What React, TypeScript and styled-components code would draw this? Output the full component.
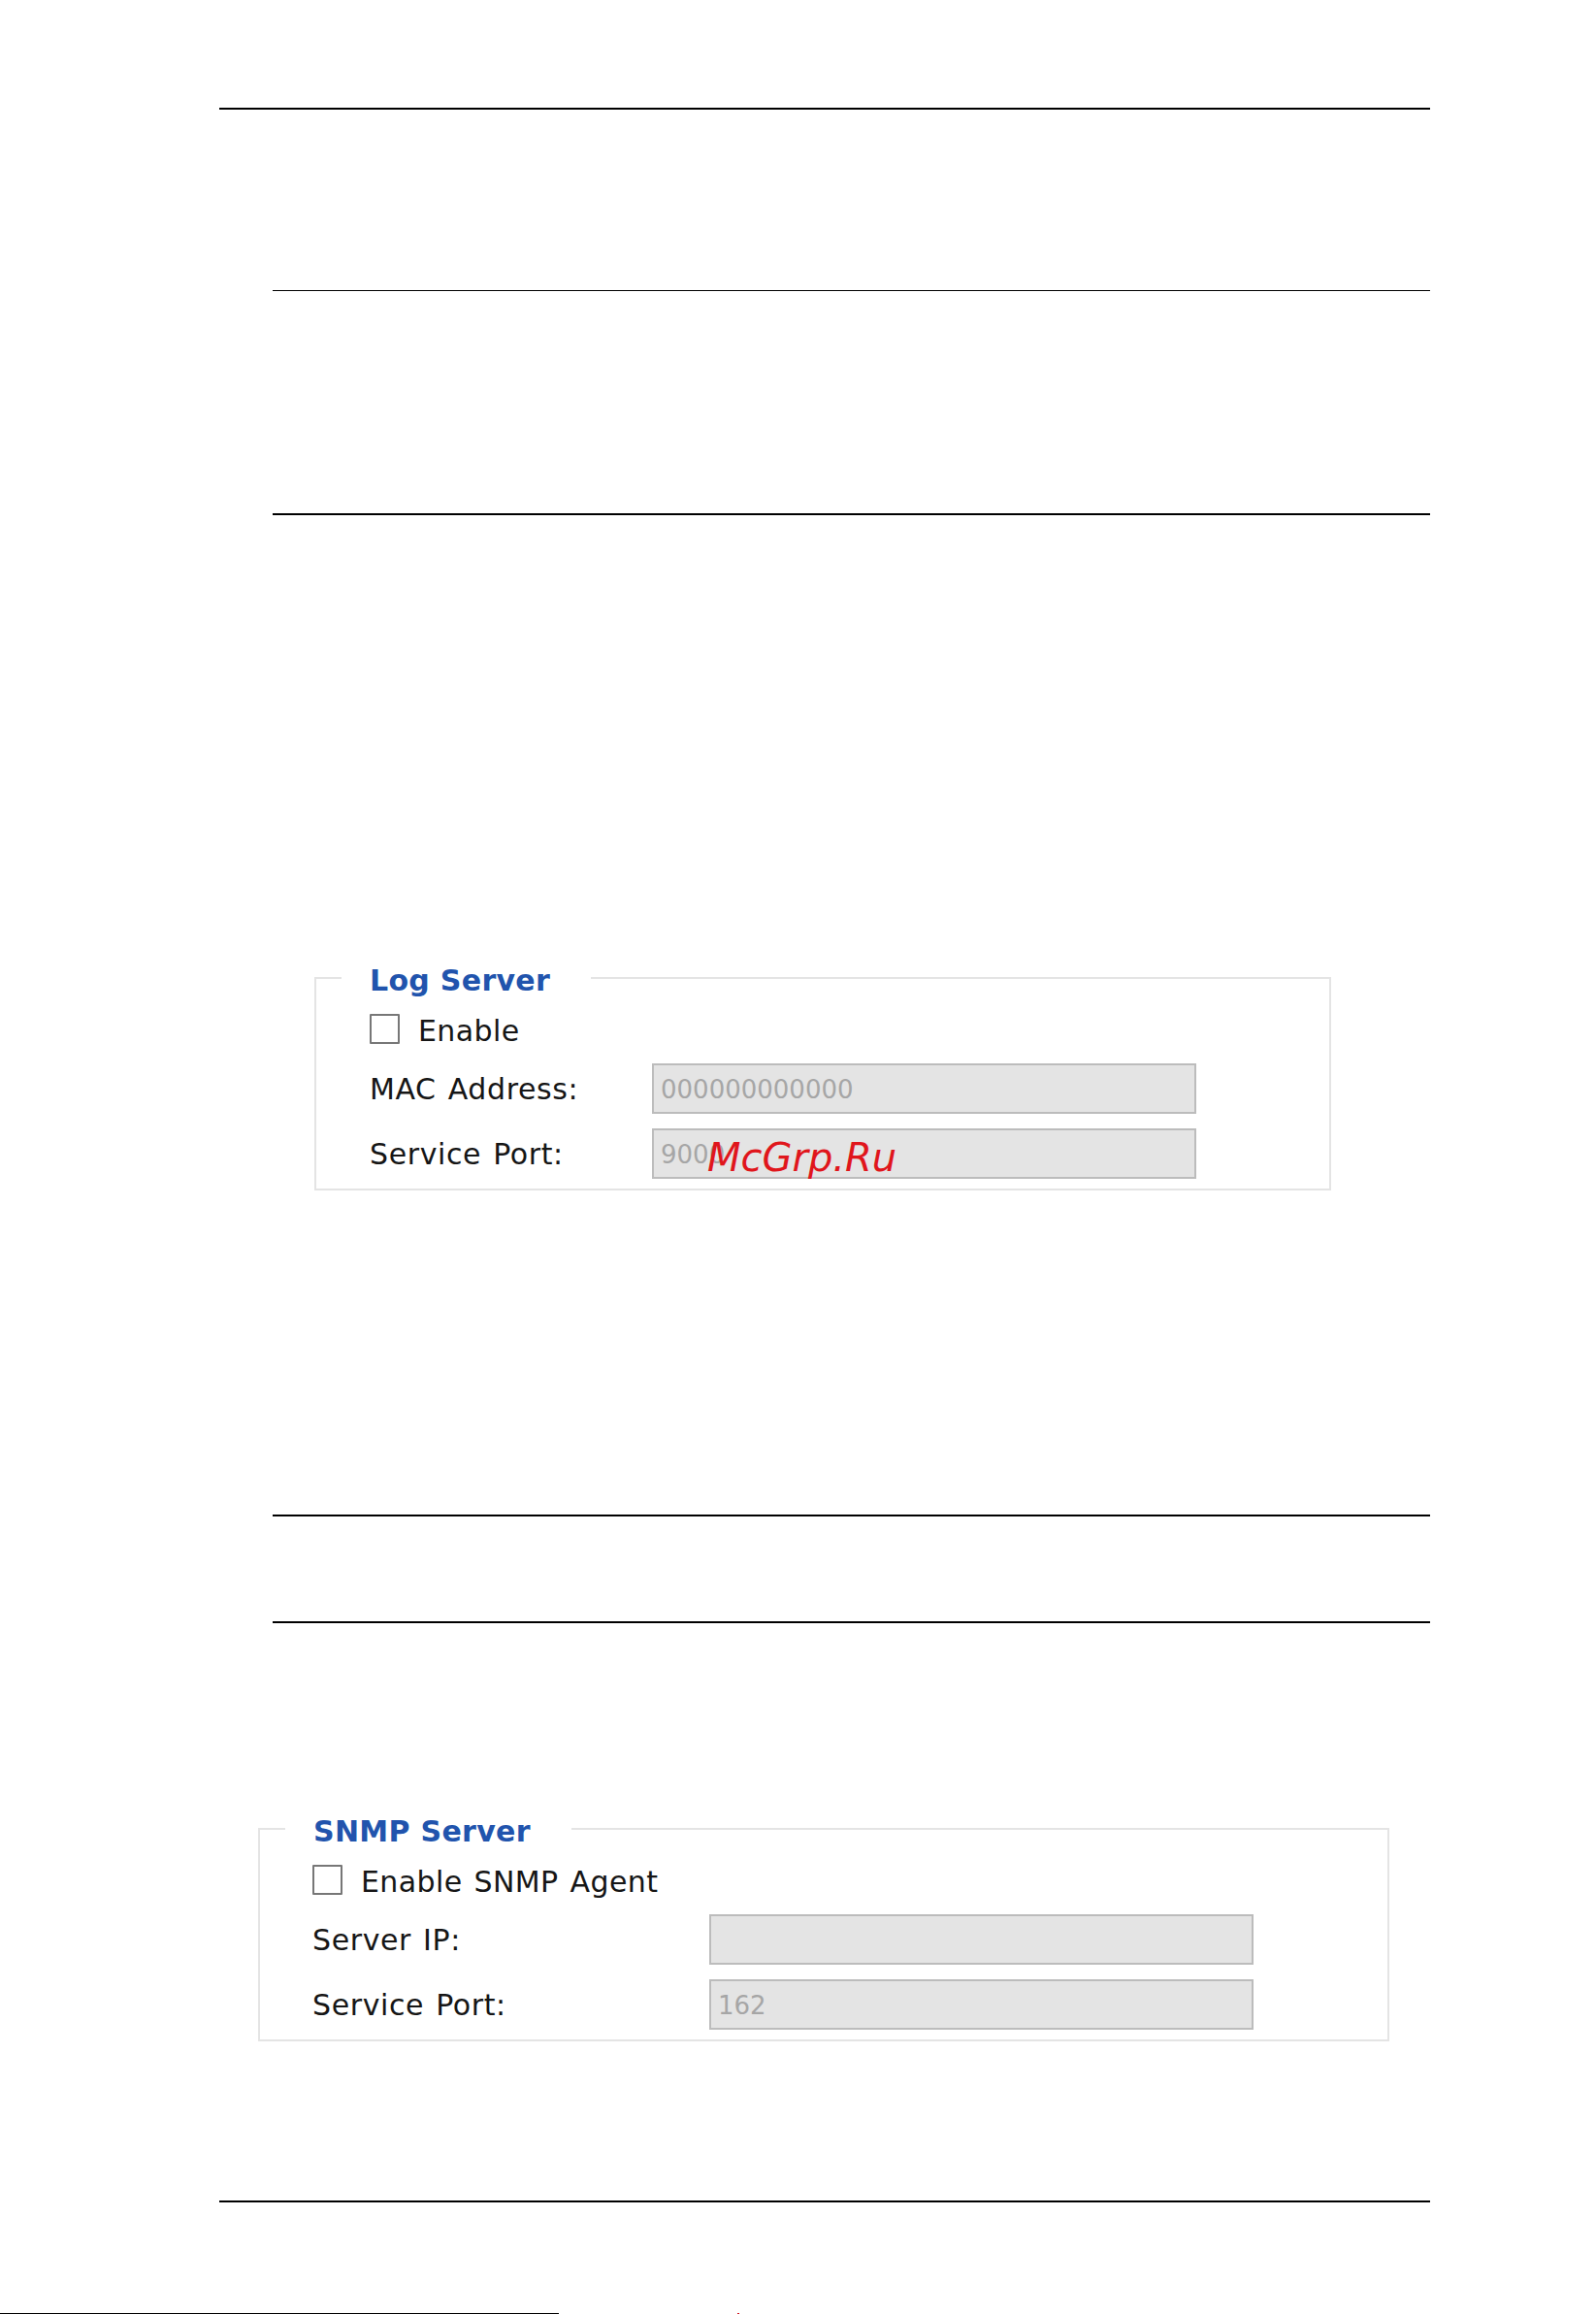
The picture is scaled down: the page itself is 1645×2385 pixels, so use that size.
import React from "react";
import styled, { createGlobalStyle } from "styled-components";

const Global = createGlobalStyle`
  html, body {
    margin: 0;
    padding: 0;
    background: #ffffff;
  }
  body {
    font-family: "DejaVu Sans", Verdana, sans-serif;
    color: #161616;
  }
`;

const Page = styled.div`
  width: 1645px;
  height: 2385px;
  display: flex;
  flex-direction: column;
  overflow: hidden;
  background: #ffffff;
`;

const Rule = styled.div<{ $top: number; $left: number; $thick: number }>`
  flex: none;
  margin-top: ${(p) => p.$top}px;
  margin-left: ${(p) => p.$left}px;
  width: ${(p) => 1474 - p.$left}px;
  height: ${(p) => p.$thick}px;
  background: #000000;
`;

const Panel = styled.fieldset<{ $top: number; $left: number; $width: number }>`
  flex: none;
  box-sizing: border-box;
  margin: ${(p) => p.$top}px 0 0 ${(p) => p.$left}px;
  width: ${(p) => p.$width}px;
  padding: 0;
  border: 2px solid #e4e4e4;
  min-inline-size: 0;
`;

const Legend = styled.legend`
  margin-left: 26px;
  padding: 7px 42px 0 29px;
  font-family: "DejaVu Sans", Verdana, sans-serif;
  font-weight: bold;
  font-size: 30px;
  line-height: 36px;
  letter-spacing: 0.3px;
  color: #2154ad;
`;

const PanelBody = styled.div<{ $labelWidth: number; $padLeft: number; $padRight: number }>`
  display: grid;
  grid-template-columns: ${(p) => p.$labelWidth}px 561px;
  grid-template-rows: 36px 52px 52px;
  row-gap: 15px;
  padding: 16px ${(p) => p.$padRight}px 10px ${(p) => p.$padLeft}px;
`;

const CheckRow = styled.label`
  grid-column: 1 / span 2;
  align-self: start;
  height: 31px;
  display: flex;
  align-items: center;
  gap: 19px;
  font-size: 30px;
  line-height: 35px;
  letter-spacing: 0.4px;
  word-spacing: 2px;
  color: #161616;
`;

const CheckText = styled.span`
  padding-top: 4px;
  white-space: nowrap;
`;

const Box = styled.input`
  appearance: none;
  -webkit-appearance: none;
  box-sizing: border-box;
  width: 31px;
  height: 31px;
  margin: 0;
  border: 2px solid #777777;
  border-radius: 1px;
  background: #ffffff;
  flex: none;
`;

const FieldLabel = styled.span`
  align-self: center;
  font-size: 30px;
  line-height: 35px;
  letter-spacing: 0.6px;
  word-spacing: 2px;
  white-space: nowrap;
  color: #161616;
`;

const FieldWrap = styled.div`
  position: relative;
  width: 561px;
  height: 52px;
`;

const Field = styled.input`
  box-sizing: border-box;
  width: 561px;
  height: 52px;
  margin: 0;
  padding: 2px 8px 0 7px;
  border: 2px solid #bcbcbc;
  background: #e4e4e4;
  font-family: "DejaVu Sans", Verdana, sans-serif;
  font-size: 26px;
  color: #a6a6a6;
  outline: none;
  &:disabled {
    color: #a6a6a6;
    -webkit-text-fill-color: #a6a6a6;
    opacity: 1;
  }
`;

const Watermark = styled.span`
  position: absolute;
  left: 57px;
  top: 10px;
  font-family: "DejaVu Sans", sans-serif;
  font-style: italic;
  font-size: 40px;
  line-height: 40px;
  color: #e0161c;
  white-space: nowrap;
  pointer-events: none;
`;

const EdgeRow = styled.div`
  flex: none;
  margin-top: 114px;
  height: 1px;
  display: flex;
  align-items: flex-start;
`;

const EdgeLine = styled.div`
  width: 576px;
  height: 1px;
  background: #000000;
`;

const EdgeDot = styled.div`
  margin-left: 184px;
  width: 2px;
  height: 1px;
  background: #d0101a;
`;

type Row = { label: string; value: string; mark?: boolean };

function ServerPanel(props: {
  title: string;
  check: string;
  rows: Row[];
  top: number;
  left: number;
  width: number;
  labelWidth: number;
  padLeft: number;
  padRight: number;
}) {
  return (
    <Panel $top={props.top} $left={props.left} $width={props.width}>
      <Legend>{props.title}</Legend>
      <PanelBody $labelWidth={props.labelWidth} $padLeft={props.padLeft} $padRight={props.padRight}>
        <CheckRow>
          <Box type="checkbox" />
          <CheckText>{props.check}</CheckText>
        </CheckRow>
        {props.rows.map((r) => (
          <React.Fragment key={r.label}>
            <FieldLabel>{r.label}</FieldLabel>
            <FieldWrap>
              <Field type="text" disabled value={r.value} readOnly />
              {r.mark && <Watermark>McGrp.Ru</Watermark>}
            </FieldWrap>
          </React.Fragment>
        ))}
      </PanelBody>
    </Panel>
  );
}

export default function App() {
  return (
    <>
      <Global />
      <Page>
        <Rule $top={111} $left={226} $thick={2} />
        <Rule $top={186} $left={281} $thick={1} />
        <Rule $top={229} $left={281} $thick={2} />
        <ServerPanel
          title="Log Server"
          check="Enable"
          rows={[
            { label: "MAC Address:", value: "000000000000" },
            { label: "Service Port:", value: "9000", mark: true },
          ]}
          top={455}
          left={324}
          width={1048}
          labelWidth={291}
          padLeft={55}
          padRight={137}
        />
        <Rule $top={334} $left={281} $thick={2} />
        <Rule $top={108} $left={281} $thick={2} />
        <ServerPanel
          title="SNMP Server"
          check="Enable SNMP Agent"
          rows={[
            { label: "Server IP:", value: "" },
            { label: "Service Port:", value: "162" },
          ]}
          top={190}
          left={266}
          width={1166}
          labelWidth={409}
          padLeft={54}
          padRight={138}
        />
        <Rule $top={164} $left={226} $thick={2} />
        <EdgeRow>
          <EdgeLine />
          <EdgeDot />
        </EdgeRow>
      </Page>
    </>
  );
}
